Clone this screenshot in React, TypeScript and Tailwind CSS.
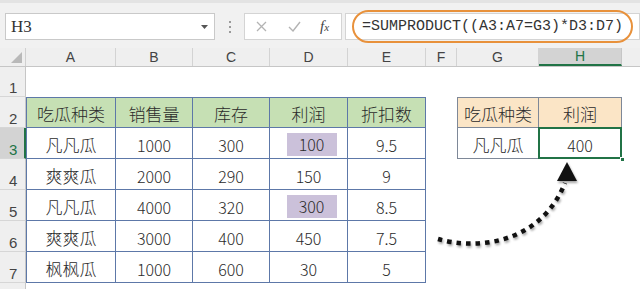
import React from "react";

const colW = [
  "w-[26px]",
  "w-[90px]",
  "w-[77px]",
  "w-[77px]",
  "w-[78px]",
  "w-[78px]",
  "w-[31px]",
  "w-[82px]",
  "w-[83px]",
  "flex-1",
];
const letters = ["", "A", "B", "C", "D", "E", "F", "G", "H", ""];

type Cell = { v: string; hl?: boolean };

const rows: { n: number; h: string; cells: Cell[] }[] = [
  { n: 1, h: "h-[30px]", cells: [] },
  {
    n: 2,
    h: "h-[31px]",
    cells: [
      { v: "吃瓜种类" },
      { v: "销售量" },
      { v: "库存" },
      { v: "利润" },
      { v: "折扣数" },
      { v: "" },
      { v: "吃瓜种类" },
      { v: "利润" },
    ],
  },
  {
    n: 3,
    h: "h-[31px]",
    cells: [
      { v: "凡凡瓜" },
      { v: "1000" },
      { v: "300" },
      { v: "100", hl: true },
      { v: "9.5" },
      { v: "" },
      { v: "凡凡瓜" },
      { v: "400" },
    ],
  },
  {
    n: 4,
    h: "h-[31px]",
    cells: [{ v: "爽爽瓜" }, { v: "2000" }, { v: "290" }, { v: "150" }, { v: "9" }],
  },
  {
    n: 5,
    h: "h-[31px]",
    cells: [
      { v: "凡凡瓜" },
      { v: "4000" },
      { v: "320" },
      { v: "300", hl: true },
      { v: "8.5" },
    ],
  },
  {
    n: 6,
    h: "h-[31px]",
    cells: [{ v: "爽爽瓜" }, { v: "3000" }, { v: "400" }, { v: "450" }, { v: "7.5" }],
  },
  {
    n: 7,
    h: "h-[31px]",
    cells: [{ v: "枫枫瓜" }, { v: "1000" }, { v: "600" }, { v: "30" }, { v: "5" }],
  },
  { n: 8, h: "h-[20px]", cells: [] },
];

const cellBorder = (row: number, col: number) => {
  // main table A2:E7
  if (row >= 2 && row <= 7 && col >= 1 && col <= 5) {
    return (
      "border-[#5d78a8] border-r border-b" +
      (col === 1 ? " border-l" : "") +
      (row === 2 ? " border-t" : "") +
      (row === 2 ? " bg-[#c6e0b4]" : " bg-white")
    );
  }
  // lookup table G2:H3
  if (row >= 2 && row <= 3 && (col === 7 || col === 8)) {
    return (
      "border-[#7e8898] border-r border-b" +
      (col === 7 ? " border-l" : "") +
      (row === 2 ? " border-t bg-[#fbe5c6]" : " bg-white")
    );
  }
  return "bg-white";
};

const TopBar = () => (
  <div className="h-[48px] border-t-[3px] border-[#e3e3e3] bg-[#f1f1f1] flex items-start pt-[10px]">
    <div className="ml-[5px] w-[210px] h-[27px] bg-white border border-[#c9c9c9] flex items-center justify-between px-[5px]">
      <span className="font-['Liberation_Serif',serif] text-[17px] text-[#333] leading-none">
        H3
      </span>
      <svg width="7" height="4" viewBox="0 0 7 4" className="mr-[1px]">
        <path d="M0 0h7L3.5 4z" fill="#555" />
      </svg>
    </div>
    <div className="w-[29px] h-[27px] flex flex-col items-center justify-center gap-[3px]">
      <span className="w-[2px] h-[2px] bg-[#9a9a9a]" />
      <span className="w-[2px] h-[2px] bg-[#9a9a9a]" />
      <span className="w-[2px] h-[2px] bg-[#9a9a9a]" />
    </div>
    <div className="w-[98px] h-[27px] bg-white border border-[#d4d4d4] flex items-center">
      <svg width="11" height="11" viewBox="0 0 11 11" className="ml-[11px]">
        <path d="M1 1l9 9M10 1l-9 9" stroke="#b3b3b3" strokeWidth="1.3" />
      </svg>
      <svg width="13" height="11" viewBox="0 0 13 11" className="ml-[21px]">
        <path d="M1 6l4 4 7-9" stroke="#b3b3b3" strokeWidth="1.4" fill="none" />
      </svg>
      <span className="ml-[19px] font-['Liberation_Serif',serif] italic text-[15px] text-[#444] leading-none">
        f<span className="text-[11px]">x</span>
      </span>
    </div>
    <div className="relative ml-[3px] flex-1 h-[27px] bg-white border border-[#d4d4d4] flex items-center">
      <span className="ml-[16px] font-['Liberation_Mono',monospace] text-[15px] text-[#333] leading-none">
        =SUMPRODUCT((A3:A7=G3)*D3:D7)
      </span>
      <span className="absolute left-[6px] top-[-4px] w-[281px] h-[33px] rounded-full border-2 border-[#e8913b]" />
    </div>
  </div>
);

const ColumnHeader = () => (
  <div className="flex h-[19px] bg-[#efefef] border-b border-[#c6c6c6]">
    {letters.map((l, i) => {
      const sel = i === 8;
      return (
        <div
          key={i}
          className={
            colW[i] +
            " h-full flex items-center justify-center font-['Liberation_Sans',sans-serif] text-[14px] " +
            (i === 0
              ? "relative border-r border-[#d0d0d0]"
              : sel
              ? "bg-[#d3d3d3] text-[#217346] border-b-2 border-b-[#217346] border-r border-r-[#c6c6c6]"
              : i === 9
              ? ""
              : "text-[#444] border-r border-[#d3d3d3]")
          }
        >
          {i === 0 ? (
            <svg width="11" height="11" viewBox="0 0 11 11" className="absolute right-[3px] bottom-[3px]">
              <path d="M11 0v11H0z" fill="#b9b9b9" />
            </svg>
          ) : (
            l
          )}
        </div>
      );
    })}
  </div>
);

const Row = ({ n, h, cells }: { n: number; h: string; cells: Cell[] }) => {
  const rowSel = n === 3;
  return (
    <div className={"flex " + h}>
      <div
        className={
          colW[0] +
          " h-full flex items-end pl-[9px] pb-[1px] font-['Liberation_Sans',sans-serif] text-[15px] leading-none border-b border-[#d6d6d6] " +
          (rowSel
            ? "bg-[#d3d3d3] text-[#217346] border-r-2 border-r-[#217346]"
            : "bg-[#efefef] text-[#444] border-r border-r-[#c6c6c6]")
        }
      >
        {n < 8 ? n : ""}
      </div>
      {colW.slice(1).map((w, idx) => {
        const col = idx + 1;
        const c = cells[idx];
        const isSelected = n === 3 && col === 8;
        const isNum = c && /^[0-9.]+$/.test(c.v);
        return (
          <div
            key={col}
            className={
              w +
              " h-full flex items-center justify-center pt-[3px] text-[#2b2b2b] font-light font-['Noto_Sans_CJK_SC',sans-serif] " +
              (isNum ? "text-[16px] " : "text-[17px] ") +
              (isSelected ? "relative " : "") +
              cellBorder(n, col)
            }
          >
            {c && c.hl ? (
              <span className="ml-[6px] mt-[-1px] w-[50px] h-[23px] bg-[#cbc1da] flex items-center justify-center">
                {c.v}
              </span>
            ) : (
              c?.v
            )}
            {isSelected && (
              <>
                <span className="absolute left-[-1px] top-[-1px] right-[-1px] bottom-[-1px] border-2 border-[#217346]" />
                <span className="absolute right-[-4px] bottom-[-4px] w-[5px] h-[5px] bg-[#217346] border border-white" />
              </>
            )}
          </div>
        );
      })}
    </div>
  );
};

const Arrow = () => (
  <svg
    width="640"
    height="289"
    viewBox="0 0 640 289"
    className="absolute left-0 top-0 pointer-events-none drop-shadow-[1px_2px_1px_rgba(0,0,0,0.35)]"
  >
    <path
      d="M438 239 C 475 250, 540 245, 565 183"
      fill="none"
      stroke="#111"
      strokeWidth="4.5"
      strokeDasharray="4.5 5"
    />
    <path d="M567 162 L577 181 L557 181 Z" fill="#111" />
  </svg>
);

export default function App() {
  return (
    <div className="relative w-[640px] h-[289px] overflow-hidden bg-white">
      <TopBar />
      <ColumnHeader />
      {rows.map((r) => (
        <Row key={r.n} n={r.n} h={r.h} cells={r.cells} />
      ))}
      <Arrow />
    </div>
  );
}
